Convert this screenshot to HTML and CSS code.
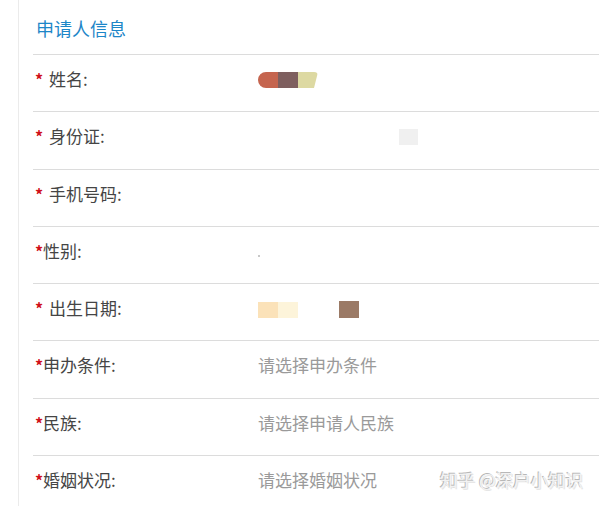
FILE: index.html
```html
<!DOCTYPE html>
<html lang="zh-CN">
<head>
  <meta charset="UTF-8" />
  <meta name="viewport" content="width=device-width, initial-scale=1" />
  <title>申请人信息</title>
  <link rel="stylesheet" href="styles.css">
</head>
<body>

  <div class="panel">
    <h2 class="panel-title">申请人信息</h2>

    <div class="row">
      <span class="label"><i class="req gap">*</i>姓名:</span>
      <span class="value">
        <span class="blur-name">
          <span class="seg seg-a"></span><span class="seg seg-b"></span><span class="seg seg-c"></span>
        </span>
      </span>
    </div>

    <div class="row">
      <span class="label"><i class="req gap">*</i>身份证:</span>
      <span class="value"><span class="blur-id"></span></span>
    </div>

    <div class="row">
      <span class="label"><i class="req gap">*</i>手机号码:</span>
      <span class="value"></span>
    </div>

    <div class="row">
      <span class="label"><i class="req">*</i>性别:</span>
      <span class="value"><span class="blur-dot"></span></span>
    </div>

    <div class="row">
      <span class="label"><i class="req gap">*</i>出生日期:</span>
      <span class="value">
        <span class="blur-date"><span class="date-a"></span><span class="date-b"></span></span>
        <span class="blur-day"></span>
      </span>
    </div>

    <div class="row">
      <span class="label"><i class="req">*</i>申办条件:</span>
      <span class="value placeholder">请选择申办条件</span>
    </div>

    <div class="row">
      <span class="label"><i class="req">*</i>民族:</span>
      <span class="value placeholder">请选择申请人民族</span>
    </div>

    <div class="row">
      <span class="label"><i class="req">*</i>婚姻状况:</span>
      <span class="value placeholder">请选择婚姻状况</span>
    </div>
  </div>

  <div class="watermark">知乎 @深户小知识</div>

</body>
</html>
```

FILE: styles.css
```css
* {
  box-sizing: border-box;
  margin: 0;
  padding: 0;
}

body {
  font-family: "Noto Sans CJK SC", "Noto Sans", sans-serif;
  background: #fff;
  color: #3d3d3d;
  width: 599px;
  height: 506px;
  overflow: hidden;
  position: relative;
}

.panel {
  margin-left: 18px;
  border-left: 1px solid #ebebeb;
  padding-left: 14px;
  min-height: 506px;
}

.panel-title {
  height: 55px;
  padding: 15px 0 0 3px;
  font-size: 18px;
  font-weight: 400;
  line-height: 26px;
  color: #1d86c8;
  border-bottom: 1px solid #dcdcdc;
}

.row {
  display: flex;
  height: 57.3px;
  padding-top: 12px;
  border-bottom: 1px solid #dcdcdc;
  font-size: 17px;
  line-height: 24px;
}

.label {
  width: 225px;
  padding-left: 2px;
  white-space: nowrap;
  color: #454545;
}

.req {
  display: inline-block;
  width: 8px;
  font-style: normal;
  font-weight: 700;
  color: #d0101b;
  font-size: 16px;
}

.req.gap {
  margin-right: 6px;
}

.value {
  display: flex;
  align-items: center;
  height: 24px;
}

.placeholder {
  color: #9a9a9a;
}

/* masked personal data */
.blur-name {
  display: flex;
  height: 16px;
  margin-top: 2px;
  border-radius: 8px 4px 4px 8px;
  overflow: hidden;
}

.seg {
  width: 20px;
  height: 16px;
}

.seg-a { background: #c5654f; }
.seg-b { background: #7e5f5f; }
.seg-c {
  background: #ddd9a2;
  clip-path: polygon(0 0, 100% 0, 80% 100%, 0 100%);
}

.blur-id {
  width: 19px;
  height: 16px;
  margin-left: 141px;
  margin-top: 2px;
  background: #f0f0f0;
}

.blur-dot {
  width: 2px;
  height: 2px;
  margin-top: 10px;
  background: #c8c8c8;
}

.blur-date {
  display: flex;
  height: 16px;
  margin-top: 3px;
}

.date-a {
  width: 20px;
  background: #fbe2b9;
}

.date-b {
  width: 20px;
  background: #fdf4da;
}

.blur-day {
  width: 20px;
  height: 17px;
  margin-left: 41px;
  margin-top: 2px;
  background: #9b7a66;
}

.watermark {
  position: absolute;
  left: 440px;
  top: 468px;
  font-size: 17.5px;
  line-height: 24px;
  color: #f2f2f2;
  text-shadow: -1px -1px 0 #b8b8b8, 1px 1px 0 #e6e6e6;
  white-space: nowrap;
}
```
